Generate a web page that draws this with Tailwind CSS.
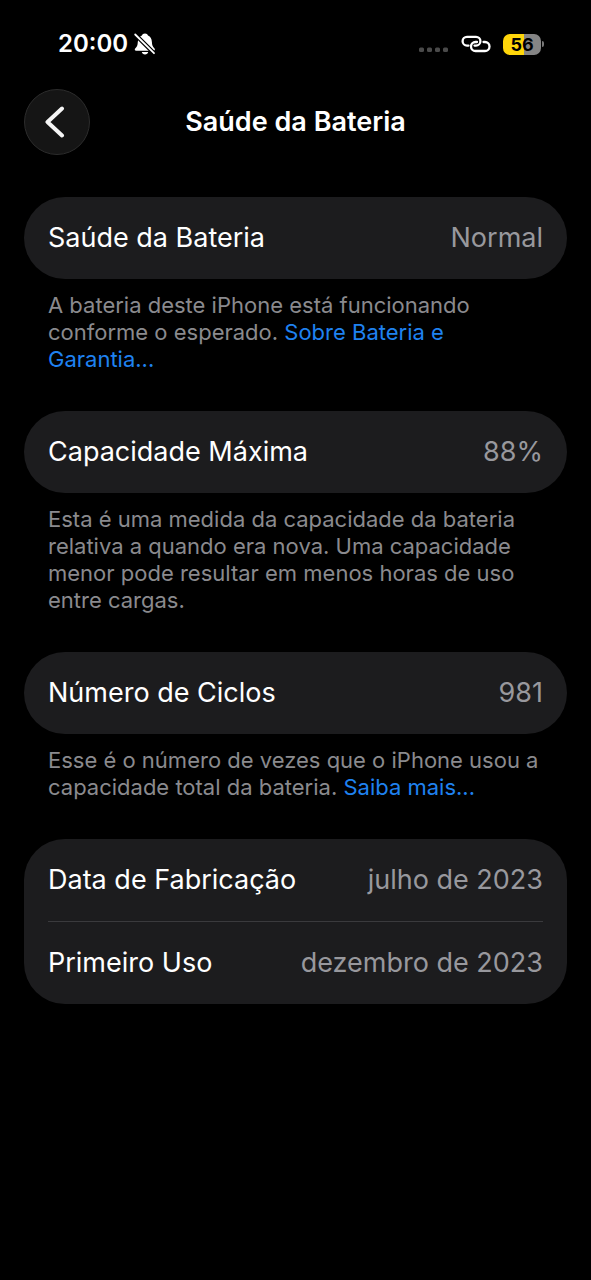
<!DOCTYPE html>
<html lang="pt-BR">
<head>
<meta charset="utf-8">
<meta name="viewport" content="width=device-width, initial-scale=1">
<title>Saúde da Bateria</title>
<script src="https://cdn.jsdelivr.net/npm/@tailwindcss/browser@4"></script>
</head>
<body class="min-h-screen bg-black font-['Inter',sans-serif] text-white">
<div class="flex items-center justify-between pt-8 pr-[47px] pl-[58px]">
  <div class="flex h-6 items-center gap-1">
    <span class="text-2xl leading-6 font-semibold">20:00</span>
    <svg class="size-6" viewBox="0 0 24 24" fill="currentColor" role="img" aria-label="Silencioso"><path d="M13 1.500c-1.600 0-2.700.8-3.100 2C7.300 4.500 6 7 5.800 10c-.2 3.500-.7 4.600-2.400 6.200-1.100 1-.7 2.600.8 2.600h17.200c1.500 0 2-1.500.9-2.600-1.600-1.600-2.200-2.700-2.400-6.200-.2-3-1.300-5.500-3.900-6.500-.4-1.200-1.400-2-3-2z"/><path d="M9.800 20h6.400c-.3 1.600-1.500 2.500-3.200 2.500S10.100 21.600 9.800 20z"/><path d="M2.500 1.800 23 22.200" stroke="#000" stroke-width="4.200"/><path d="M3.200 2.500 22 21.200" stroke="currentColor" stroke-width="1.800" stroke-linecap="round"/></svg>
  </div>
  <div class="flex h-6 items-center gap-3">
    <svg class="h-4 w-[30px]" viewBox="0 0 30 16" fill="#4a4a4a" role="img" aria-label="Sem sinal"><rect y="11.500" width="5" height="4.500" rx="1.500"/><rect x="8" y="11.500" width="5" height="4.500" rx="1.500"/><rect x="16" y="11.500" width="5" height="4.500" rx="1.500"/><rect x="24" y="11.500" width="5" height="4.500" rx="1.500"/></svg>
    <svg class="h-5 w-[30px]" viewBox="0 0 30 20" fill="none" stroke="currentColor" stroke-width="2.300" stroke-linecap="round" role="img" aria-label="Acesso pessoal"><path d="M7.500 11.600H6a4.400 4.400 0 0 1 0-8.800h9a4.400 4.400 0 0 1 0 8.800h-1.500"/><path d="M22.500 8H24a4.500 4.500 0 0 1 0 9h-9.500a4.500 4.500 0 0 1 0-9H16"/></svg>
    <div class="flex items-center gap-px">
      <div class="h-[21px] w-[38px] rounded-[7px] bg-linear-to-r from-[#ffd60a] from-56% to-[#858585] to-56% text-center text-lg leading-[21px] font-bold text-black">56</div>
      <div class="h-[6px] w-[2px] rounded-r-full bg-[#777]"></div>
    </div>
  </div>
</div>
<header class="mt-[33px] grid grid-cols-[66px_1fr_66px] items-center px-6">
  <button type="button" aria-label="Voltar" class="flex size-[66px] items-center justify-center rounded-full border border-[#2c2c2c] bg-[#151515]"><svg class="h-9 w-6" viewBox="0 0 24 36" fill="none" stroke="#f5f5f5" stroke-width="4" stroke-linecap="round" stroke-linejoin="round"><path d="M17 4.500 2.500 18 17 31.500"/></svg></button>
  <h1 class="text-center text-[27px] leading-8 font-semibold">Saúde da Bateria</h1>
</header>
<main class="mt-[42px] px-6">
  <section>
    <div class="flex h-[82px] items-center justify-between rounded-[41px] bg-[#1c1c1e] px-6 text-[27px]"><h2>Saúde da Bateria</h2><span class="text-[#98989d]">Normal</span></div>
    <p class="mt-[13px] px-6 text-[22px] leading-[27px] text-[#8a8a8e]">A bateria deste iPhone está funcionando<br>conforme o esperado. <a href="#" class="text-[#1f82f0]">Sobre Bateria e<br>Garantia...</a></p>
  </section>
  <section class="mt-[38px]">
    <div class="flex h-[82px] items-center justify-between rounded-[41px] bg-[#1c1c1e] px-6 text-[27px]"><h2>Capacidade Máxima</h2><span class="text-[#98989d]">88%</span></div>
    <p class="mt-[13px] px-6 text-[22px] leading-[27px] text-[#8a8a8e]">Esta é uma medida da capacidade da bateria<br>relativa a quando era nova. Uma capacidade<br>menor pode resultar em menos horas de uso<br>entre cargas.</p>
  </section>
  <section class="mt-[38px]">
    <div class="flex h-[82px] items-center justify-between rounded-[41px] bg-[#1c1c1e] px-6 text-[27px]"><h2>Número de Ciclos</h2><span class="text-[#98989d]">981</span></div>
    <p class="mt-[13px] px-6 text-[22px] leading-[27px] text-[#8a8a8e]">Esse é o número de vezes que o iPhone usou a<br>capacidade total da bateria. <a href="#" class="text-[#1f82f0]">Saiba mais...</a></p>
  </section>
  <section class="mt-[38px] rounded-[41px] bg-[#1c1c1e] px-6 text-[27px]">
    <div class="flex h-[83px] items-center justify-between border-b border-[#3a3a3d]"><h2>Data de Fabricação</h2><span class="text-[#98989d]">julho de 2023</span></div>
    <div class="flex h-[82px] items-center justify-between"><h2>Primeiro Uso</h2><span class="text-[#98989d]">dezembro de 2023</span></div>
  </section>
</main>
</body>
</html>
